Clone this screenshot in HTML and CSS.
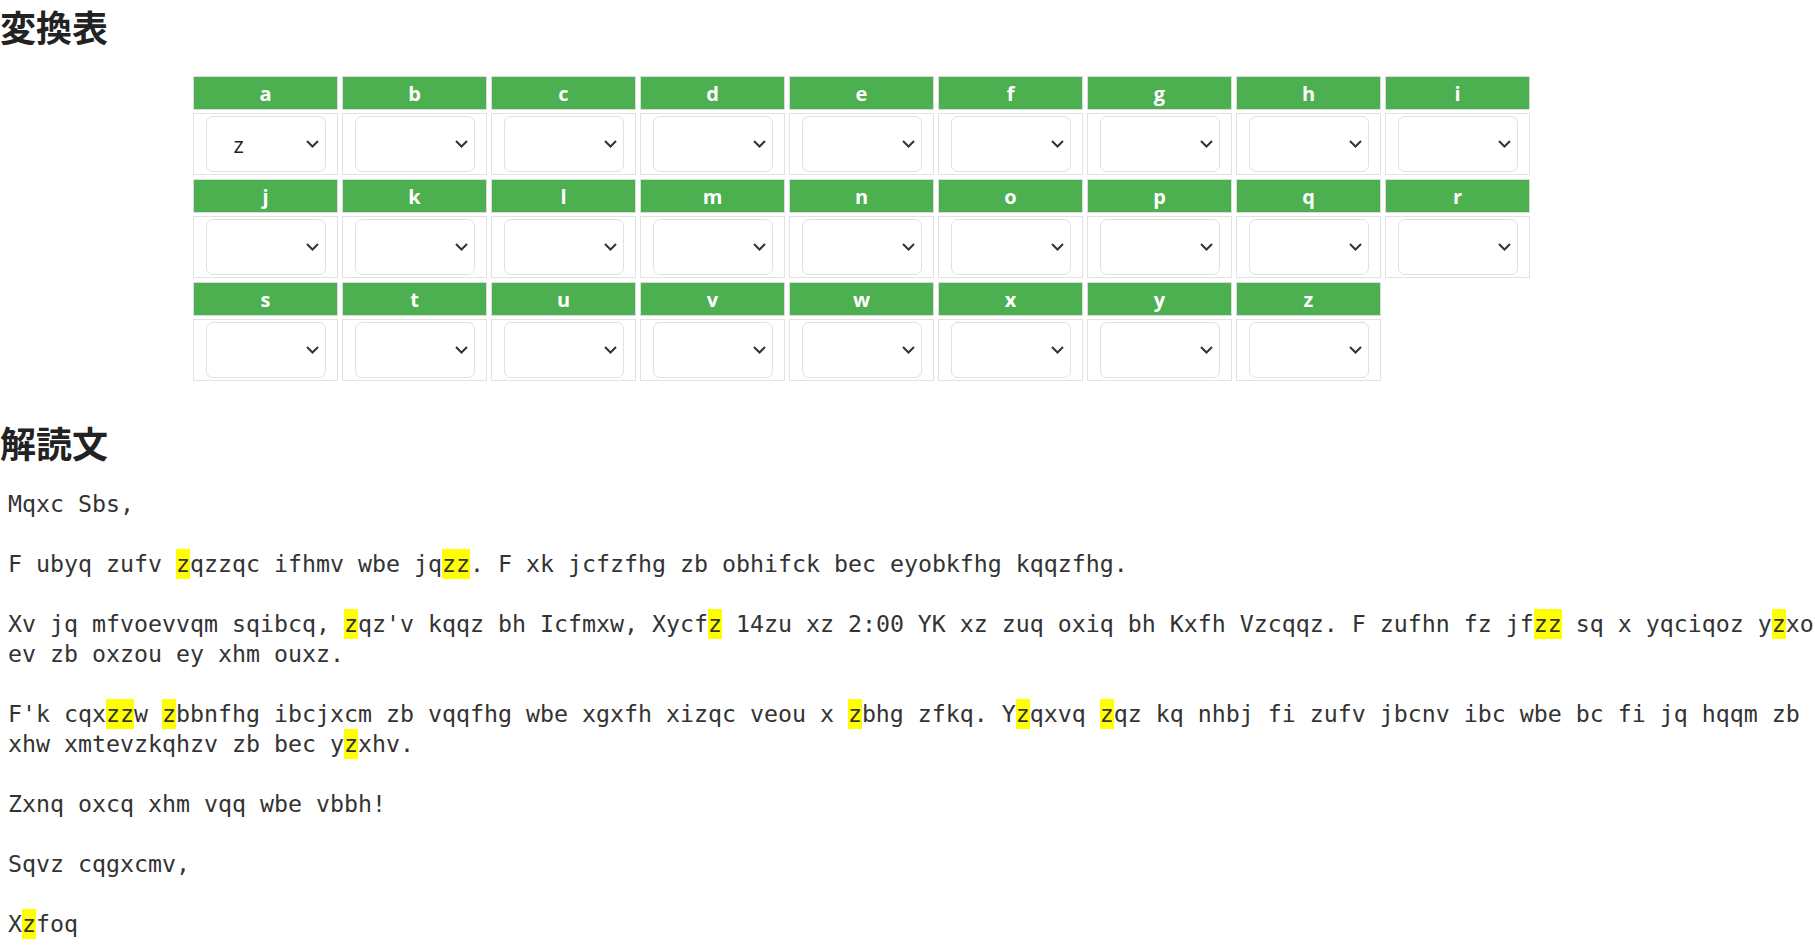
FILE: index.html
```html
<!DOCTYPE html>
<html lang="ja">
<head>
<meta charset="utf-8">
<title>変換表</title>
<link rel="stylesheet" href="styles.css">
</head>
<body>
<h2 class="title">変換表</h2>
<div class="table">
  <div class="col"><div class="head">a</div><div class="cell"><div class="sel"><select><option></option><option selected>z</option></select><svg class="chev" viewBox="0 0 13 8"><path d="M1 1 L6.5 6.5 L12 1"/></svg></div></div></div>
  <div class="col"><div class="head">b</div><div class="cell"><div class="sel"><select><option></option></select><svg class="chev" viewBox="0 0 13 8"><path d="M1 1 L6.5 6.5 L12 1"/></svg></div></div></div>
  <div class="col"><div class="head">c</div><div class="cell"><div class="sel"><select><option></option></select><svg class="chev" viewBox="0 0 13 8"><path d="M1 1 L6.5 6.5 L12 1"/></svg></div></div></div>
  <div class="col"><div class="head">d</div><div class="cell"><div class="sel"><select><option></option></select><svg class="chev" viewBox="0 0 13 8"><path d="M1 1 L6.5 6.5 L12 1"/></svg></div></div></div>
  <div class="col"><div class="head">e</div><div class="cell"><div class="sel"><select><option></option></select><svg class="chev" viewBox="0 0 13 8"><path d="M1 1 L6.5 6.5 L12 1"/></svg></div></div></div>
  <div class="col"><div class="head">f</div><div class="cell"><div class="sel"><select><option></option></select><svg class="chev" viewBox="0 0 13 8"><path d="M1 1 L6.5 6.5 L12 1"/></svg></div></div></div>
  <div class="col"><div class="head">g</div><div class="cell"><div class="sel"><select><option></option></select><svg class="chev" viewBox="0 0 13 8"><path d="M1 1 L6.5 6.5 L12 1"/></svg></div></div></div>
  <div class="col"><div class="head">h</div><div class="cell"><div class="sel"><select><option></option></select><svg class="chev" viewBox="0 0 13 8"><path d="M1 1 L6.5 6.5 L12 1"/></svg></div></div></div>
  <div class="col"><div class="head">i</div><div class="cell"><div class="sel"><select><option></option></select><svg class="chev" viewBox="0 0 13 8"><path d="M1 1 L6.5 6.5 L12 1"/></svg></div></div></div>
  <div class="col"><div class="head">j</div><div class="cell"><div class="sel"><select><option></option></select><svg class="chev" viewBox="0 0 13 8"><path d="M1 1 L6.5 6.5 L12 1"/></svg></div></div></div>
  <div class="col"><div class="head">k</div><div class="cell"><div class="sel"><select><option></option></select><svg class="chev" viewBox="0 0 13 8"><path d="M1 1 L6.5 6.5 L12 1"/></svg></div></div></div>
  <div class="col"><div class="head">l</div><div class="cell"><div class="sel"><select><option></option></select><svg class="chev" viewBox="0 0 13 8"><path d="M1 1 L6.5 6.5 L12 1"/></svg></div></div></div>
  <div class="col"><div class="head">m</div><div class="cell"><div class="sel"><select><option></option></select><svg class="chev" viewBox="0 0 13 8"><path d="M1 1 L6.5 6.5 L12 1"/></svg></div></div></div>
  <div class="col"><div class="head">n</div><div class="cell"><div class="sel"><select><option></option></select><svg class="chev" viewBox="0 0 13 8"><path d="M1 1 L6.5 6.5 L12 1"/></svg></div></div></div>
  <div class="col"><div class="head">o</div><div class="cell"><div class="sel"><select><option></option></select><svg class="chev" viewBox="0 0 13 8"><path d="M1 1 L6.5 6.5 L12 1"/></svg></div></div></div>
  <div class="col"><div class="head">p</div><div class="cell"><div class="sel"><select><option></option></select><svg class="chev" viewBox="0 0 13 8"><path d="M1 1 L6.5 6.5 L12 1"/></svg></div></div></div>
  <div class="col"><div class="head">q</div><div class="cell"><div class="sel"><select><option></option></select><svg class="chev" viewBox="0 0 13 8"><path d="M1 1 L6.5 6.5 L12 1"/></svg></div></div></div>
  <div class="col"><div class="head">r</div><div class="cell"><div class="sel"><select><option></option></select><svg class="chev" viewBox="0 0 13 8"><path d="M1 1 L6.5 6.5 L12 1"/></svg></div></div></div>
  <div class="col"><div class="head">s</div><div class="cell"><div class="sel"><select><option></option></select><svg class="chev" viewBox="0 0 13 8"><path d="M1 1 L6.5 6.5 L12 1"/></svg></div></div></div>
  <div class="col"><div class="head">t</div><div class="cell"><div class="sel"><select><option></option></select><svg class="chev" viewBox="0 0 13 8"><path d="M1 1 L6.5 6.5 L12 1"/></svg></div></div></div>
  <div class="col"><div class="head">u</div><div class="cell"><div class="sel"><select><option></option></select><svg class="chev" viewBox="0 0 13 8"><path d="M1 1 L6.5 6.5 L12 1"/></svg></div></div></div>
  <div class="col"><div class="head">v</div><div class="cell"><div class="sel"><select><option></option></select><svg class="chev" viewBox="0 0 13 8"><path d="M1 1 L6.5 6.5 L12 1"/></svg></div></div></div>
  <div class="col"><div class="head">w</div><div class="cell"><div class="sel"><select><option></option></select><svg class="chev" viewBox="0 0 13 8"><path d="M1 1 L6.5 6.5 L12 1"/></svg></div></div></div>
  <div class="col"><div class="head">x</div><div class="cell"><div class="sel"><select><option></option></select><svg class="chev" viewBox="0 0 13 8"><path d="M1 1 L6.5 6.5 L12 1"/></svg></div></div></div>
  <div class="col"><div class="head">y</div><div class="cell"><div class="sel"><select><option></option></select><svg class="chev" viewBox="0 0 13 8"><path d="M1 1 L6.5 6.5 L12 1"/></svg></div></div></div>
  <div class="col"><div class="head">z</div><div class="cell"><div class="sel"><select><option></option></select><svg class="chev" viewBox="0 0 13 8"><path d="M1 1 L6.5 6.5 L12 1"/></svg></div></div></div>
</div>
<h2 class="title title-2">解読文</h2>
<pre class="text">Mqxc Sbs,

F ubyq zufv <span class="hl">z</span>qzzqc ifhmv wbe jq<span class="hl">zz</span>. F xk jcfzfhg zb obhifck bec eyobkfhg kqqzfhg.

Xv jq mfvoevvqm sqibcq, <span class="hl">z</span>qz'v kqqz bh Icfmxw, Xycf<span class="hl">z</span> 14zu xz 2:00 YK xz zuq oxiq bh Kxfh Vzcqqz. F zufhn fz jf<span class="hl">zz</span> sq x yqciqoz y<span class="hl">z</span>xo
ev zb oxzou ey xhm ouxz.

F'k cqx<span class="hl">zz</span>w <span class="hl">z</span>bbnfhg ibcjxcm zb vqqfhg wbe xgxfh xizqc veou x <span class="hl">z</span>bhg zfkq. Y<span class="hl">z</span>qxvq <span class="hl">z</span>qz kq nhbj fi zufv jbcnv ibc wbe bc fi jq hqqm zb
xhw xmtevzkqhzv zb bec y<span class="hl">z</span>xhv.

Zxnq oxcq xhm vqq wbe vbbh!

Sqvz cqgxcmv,

X<span class="hl">z</span>foq</pre>
</body>
</html>
```

FILE: styles.css
```css
html, body {
  margin: 0;
  padding: 0;
  background: #fff;
  overflow: hidden;
}

body {
  font-family: "Noto Sans CJK JP", "Noto Sans", sans-serif;
  color: #222;
}

.title {
  margin: 0 0 24px 0;
  font-size: 36px;
  font-weight: 700;
  color: #222;
  line-height: 52px;
}

.title-2 {
  margin-top: 35px;
  margin-bottom: 21px;
}

.table {
  display: flex;
  flex-wrap: wrap;
  gap: 4px;
  width: 1337px;
  margin-left: 193px;
}

.col {
  width: 145px;
  display: flex;
  flex-direction: column;
  gap: 3px;
}

.head {
  box-sizing: border-box;
  height: 34px;
  background: #4caf50;
  border: 1px solid #dcdcdc;
  color: #fff;
  font-family: "Open Sans", "Noto Sans", sans-serif;
  font-weight: 700;
  font-size: 20px;
  line-height: 30px;
  padding-top: 2px;
  text-align: center;
  overflow: hidden;
}

.cell {
  box-sizing: border-box;
  height: 62px;
  border: 1px solid #e2e2e2;
  display: flex;
  align-items: center;
  justify-content: center;
}

.sel {
  position: relative;
  width: 120px;
  height: 56px;
}

.sel select {
  box-sizing: border-box;
  width: 120px;
  height: 56px;
  appearance: none;
  -webkit-appearance: none;
  background: #fff;
  border: 1px solid #e0e0e0;
  border-radius: 7px;
  padding: 0 0 0 27px;
  font-family: "Open Sans", "Noto Sans", sans-serif;
  font-size: 22px;
  color: #222;
  outline: none;
}

.chev {
  position: absolute;
  right: 7px;
  top: 24px;
  width: 13px;
  height: 8px;
  pointer-events: none;
}

.chev path {
  fill: none;
  stroke: #333;
  stroke-width: 2;
}

.text {
  margin: 0;
  padding: 0 0 0 8px;
  font-family: "DejaVu Sans Mono", "Liberation Mono", monospace;
  font-size: 23.25px;
  line-height: 30px;
  color: #333;
  white-space: pre;
  overflow: hidden;
}

.hl {
  background: #ffff00;
  padding: 1px 0 2px;
}
```
